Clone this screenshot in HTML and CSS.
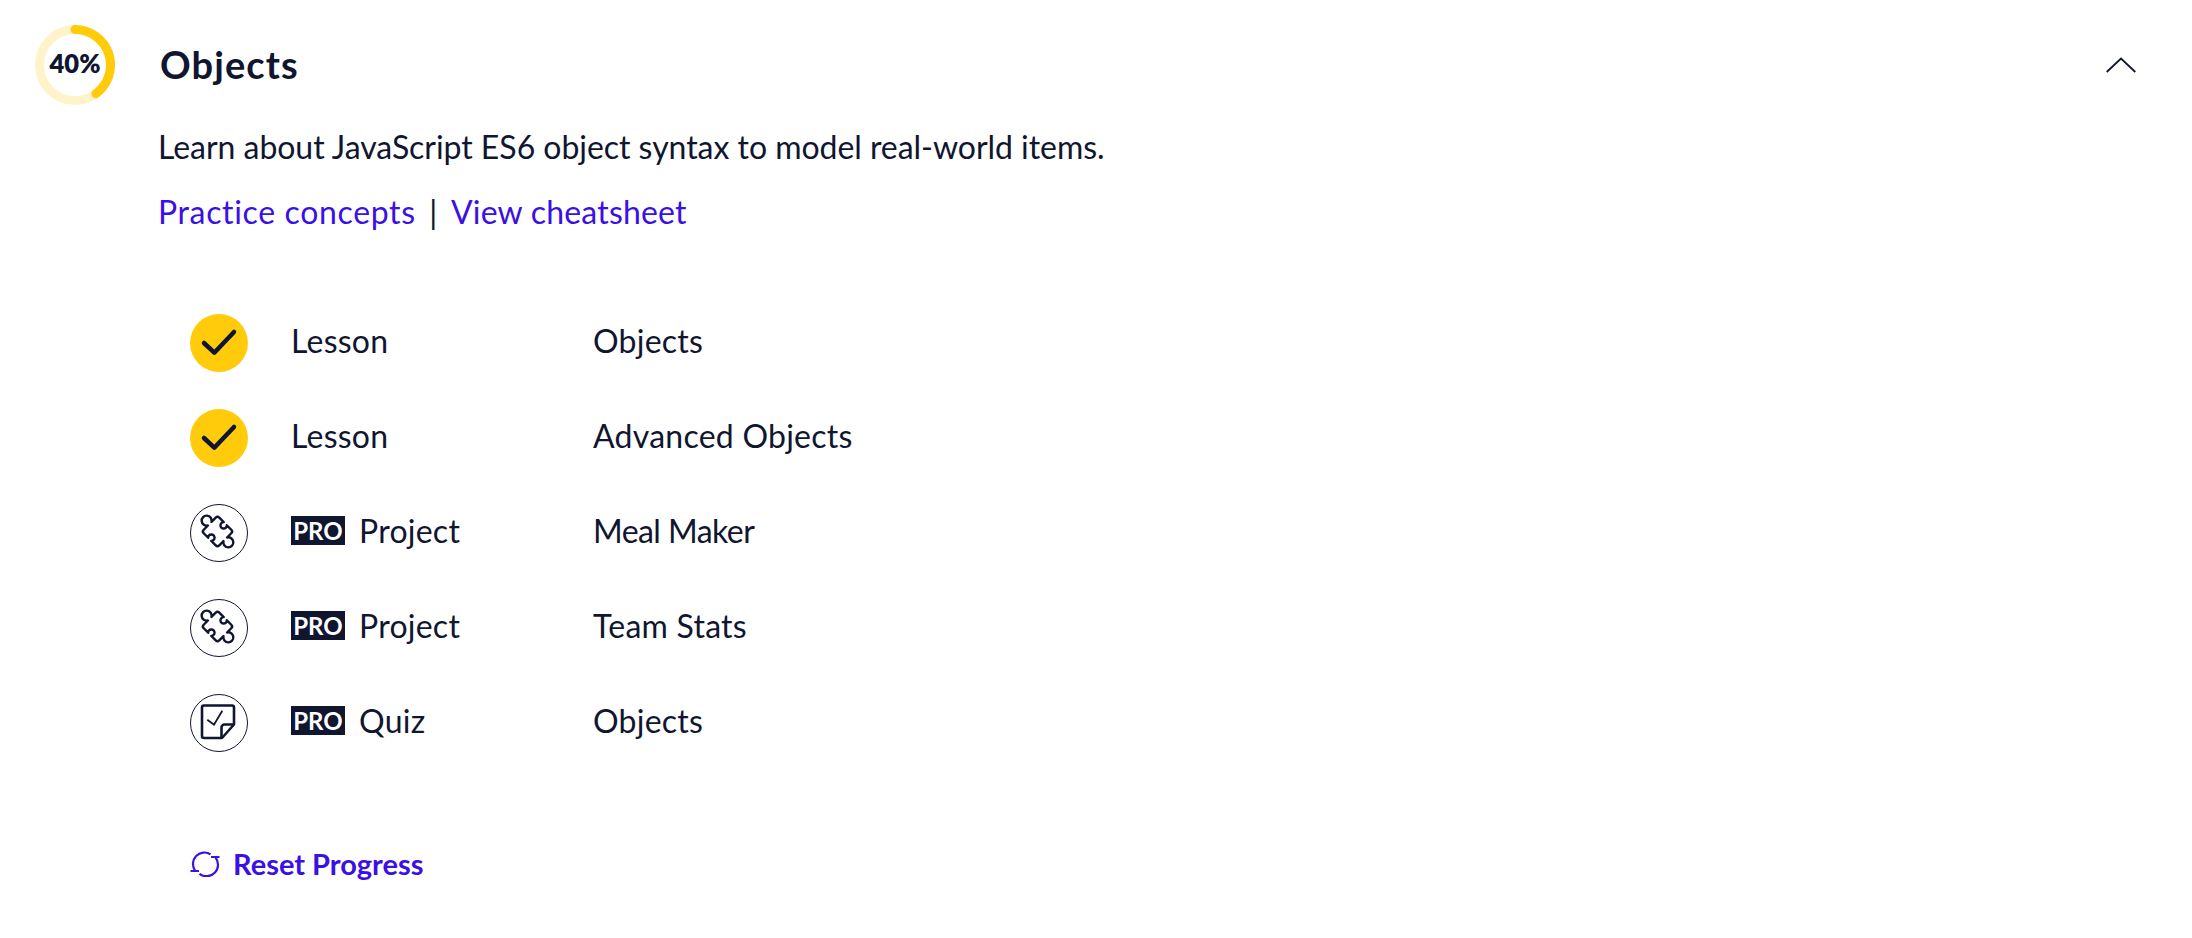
FILE: index.html
```html
<!DOCTYPE html>
<html lang="en">
<head>
    <meta charset="UTF-8">
    <title>Objects</title>
    <link rel="stylesheet" href="styles.css">
</head>
<body>
    <div class="module">
        <div class="module-head">
            <div class="ring">
                <svg width="80" height="80" viewBox="0 0 80 80">
                    <circle cx="40" cy="40" r="35.5" fill="none" stroke="#fff3c9" stroke-width="9"/>
                    <path d="M40 4.500A35.500 35.500 0 0 1 60.900 68.700" fill="none" stroke="#ffcb0b" stroke-width="9" stroke-linecap="round"/>
                </svg>
                <span class="ring-label">40%</span>
            </div>
            <h2 class="module-title">Objects</h2>
            <svg class="chevron" width="30" height="16" viewBox="0 0 30 16"><path d="M.7 15L15 1.500 29.300 15" fill="none" stroke="#10162f" stroke-width="1.8"/></svg>
        </div>
        <p class="module-desc">Learn about JavaScript ES6 object syntax to model real-world items.</p>
        <p class="module-links"><a class="link-first" href="#">Practice concepts</a><span class="sep">|</span><a href="#">View cheatsheet</a></p>

        <ul class="items">
            <li class="item">
                <span class="badge done"><svg width="58" height="58" viewBox="0 0 58 58"><path d="M14 29l10.300 9.700L44 18" fill="none" stroke="#10162f" stroke-width="4.500" stroke-linecap="round" stroke-linejoin="round"/></svg></span>
                <span class="kind">Lesson</span>
                <span class="name">Objects</span>
            </li>
            <li class="item">
                <span class="badge done"><svg width="58" height="58" viewBox="0 0 58 58"><path d="M14 29l10.300 9.700L44 18" fill="none" stroke="#10162f" stroke-width="4.500" stroke-linecap="round" stroke-linejoin="round"/></svg></span>
                <span class="kind">Lesson</span>
                <span class="name">Advanced Objects</span>
            </li>
            <li class="item">
                <span class="badge"><svg width="58" height="58" viewBox="0 0 58 58"><path class="puzzle" transform="translate(28.500 28.500) rotate(45)" d="M-8.500-11H-2.200A3.200 3.200 0 1 0 2.200-11H8.500A2.500 2.500 0 0 1 11-8.500V-2.500A5 5 0 1 1 11 2.500V8.500A2.500 2.500 0 0 1 8.500 11H2.200A3.200 3.200 0 1 0-2.200 11H-8.500A2.500 2.500 0 0 1-11 8.500V2.500A5 5 0 1 1-11-2.500V-8.500A2.500 2.500 0 0 1-8.500-11Z"/></svg></span>
                <span class="kind"><span class="pro">PRO</span>Project</span>
                <span class="name name-tight">Meal Maker</span>
            </li>
            <li class="item">
                <span class="badge"><svg width="58" height="58" viewBox="0 0 58 58"><path class="puzzle" transform="translate(28.500 28.500) rotate(45)" d="M-8.500-11H-2.200A3.200 3.200 0 1 0 2.200-11H8.500A2.500 2.500 0 0 1 11-8.500V-2.500A5 5 0 1 1 11 2.500V8.500A2.500 2.500 0 0 1 8.500 11H2.200A3.200 3.200 0 1 0-2.200 11H-8.500A2.500 2.500 0 0 1-11 8.500V2.500A5 5 0 1 1-11-2.500V-8.500A2.500 2.500 0 0 1-8.500-11Z"/></svg></span>
                <span class="kind"><span class="pro">PRO</span>Project</span>
                <span class="name">Team Stats</span>
            </li>
            <li class="item">
                <span class="badge"><svg width="58" height="58" viewBox="0 0 58 58"><path d="M15 12.500h28a2 2 0 0 1 2 2V31.500L33 45H15a2 2 0 0 1-2-2V14.500a2 2 0 0 1 2-2z" fill="none" stroke="#10162f" stroke-width="2.600" stroke-linejoin="round"/><path d="M45 31.500H35.500a3 3 0 0 0-3 3V45" fill="none" stroke="#10162f" stroke-width="2.600"/><path d="M18.300 26.700l6.700 5 8.300-14" fill="none" stroke="#10162f" stroke-width="1.800"/></svg></span>
                <span class="kind"><span class="pro">PRO</span>Quiz</span>
                <span class="name">Objects</span>
            </li>
        </ul>

        <a class="reset" href="#">
            <svg width="30" height="26" viewBox="0 0 30 26"><path d="M20.500 3.200A11.500 11.500 0 0 0 5 19.500M.5 20H9M9.500 22.800A11.500 11.500 0 0 0 25.500 6.500M21 6H29.500" fill="none" stroke="#3a10e5" stroke-width="2.200"/></svg>
            Reset Progress
        </a>
    </div>
</body>
</html>
```

FILE: styles.css
```css
body { margin: 0; background-color: #fff; color: #10162f; font-family: "Lato", "Noto Sans", sans-serif; font-variant-ligatures: none; }
a { color: #3a10e5; text-decoration: none; }
.module { padding: 25px 35px 0 35px; }
.module-head { display: flex; align-items: center; height: 80px; }
.ring { position: relative; width: 80px; height: 80px; }
.ring svg { display: block; }
.ring-label { position: absolute; top: 0; left: 0; width: 80px; line-height: 77px; text-align: center; font-size: 25.5px; font-weight: 800; }
.module-title { margin: 0 0 3px 45px; flex: 1; font-size: 38px; font-weight: 700; letter-spacing: 1.1px; }
.chevron { margin-right: 21px; }
.module-desc { margin: 21.5px 0 0 123px; font-size: 32px; line-height: 40px; letter-spacing: -0.04px; }
.module-links { margin: 25px 0 0 123px; font-size: 32px; line-height: 40px; letter-spacing: 0.2px; }
.link-first { letter-spacing: 0.65px; }
.sep { margin: 0 13.5px; }
.items { list-style: none; margin: 63.5px 0 0 155px; padding: 0; }
.item { display: flex; align-items: center; height: 95px; font-size: 32px; letter-spacing: 0.25px; }
.badge { width: 58px; height: 58px; box-sizing: border-box; border: 1.8px solid #10162f; border-radius: 50%; flex: none; }
.badge svg { display: block; margin: -1.8px; }
.badge.done { border: none; background-color: #ffcb0b; }
.badge.done svg { margin: 0; }
.kind { width: 302px; margin-left: 43px; padding-bottom: 4px; flex: none; display: flex; align-items: center; }
.name { padding-bottom: 4px; }
.name-tight { letter-spacing: -0.55px; }
.pro { display: inline-block; background-color: #10162f; color: #fff; font-size: 24px; font-weight: 700; letter-spacing: 0; width: 54px; height: 29px; line-height: 29px; text-align: center; margin-right: 14px; }
.puzzle { fill: none; stroke: #10162f; stroke-width: 2.4; stroke-linejoin: round; }
.reset { display: flex; align-items: center; margin: 76px 0 0 155px; font-size: 29px; font-weight: 700; gap: 13px; }
```
